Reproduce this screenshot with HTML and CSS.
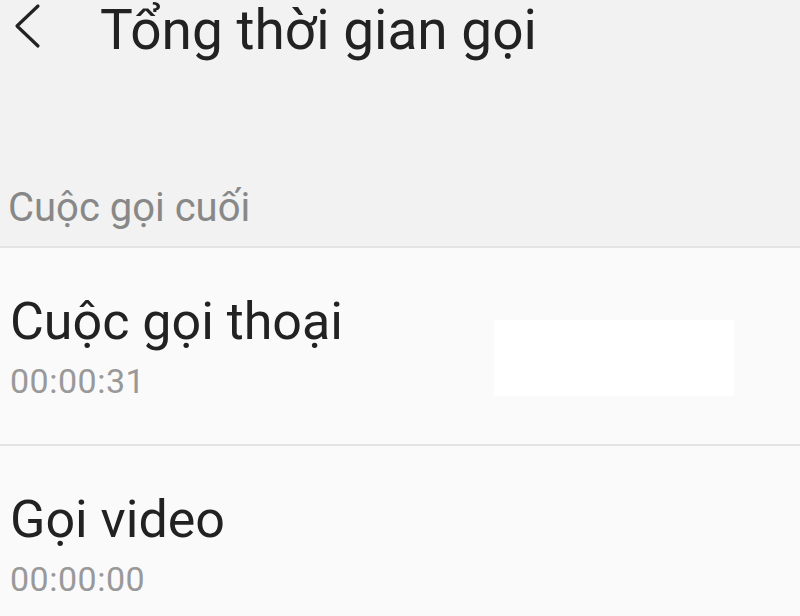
FILE: index.html
```html
<!DOCTYPE html>
<html lang="vi">
<head>
<meta charset="utf-8">
<link rel="stylesheet" href="styles.css">
</head>
<body>
<div class="screen">
  <header class="topbar">
    <span class="back"><svg width="30" height="46" viewBox="0 0 30 46"><path d="M26 3 L5 23 L26 43" fill="none" stroke="#222" stroke-width="3.2" stroke-linecap="round" stroke-linejoin="round"/></svg></span>
    <h1 class="title">Tổng thời gian gọi</h1>
  </header>
  <div class="section">Cuộc gọi cuối</div>
  <div class="list">
    <div class="item">
      <div class="item-main">Cuộc gọi thoại</div>
      <div class="item-sub">00:00:31</div>
      <div class="blank"></div>
    </div>
    <div class="item">
      <div class="item-main">Gọi video</div>
      <div class="item-sub">00:00:00</div>
    </div>
  </div>
</div>
</body>
</html>
```
FILE: styles.css
```css
html, body { margin: 0; padding: 0; }
body { font-family: Roboto, "Noto Sans", sans-serif; background: #fafafa; }
.screen { width: 800px; height: 616px; overflow: hidden; background: #fafafa; }
.topbar { height: 170px; background: #f2f2f2; display: flex; align-items: flex-start; }
.back { width: 100px; padding: 3px 0 0 12px; box-sizing: border-box; display: flex; }
.title { margin: 0; font-weight: 400; font-size: 55px; line-height: 60px; color: #222; }
.section { height: 78px; background: #f2f2f2; color: #888; font-size: 40px; padding-left: 8px; box-sizing: border-box; border-bottom: 2px solid #e4e4e4; line-height: 76px; }
.list { background: #fafafa; }
.item { position: relative; height: 198px; border-bottom: 2px solid #e4e4e4; padding: 44px 10px 0; box-sizing: border-box; }
.item-main { font-size: 52px; line-height: 60px; color: #222; }
.item-sub { font-size: 34px; line-height: 58px; color: #999; letter-spacing: 0.5px; }
.blank { position: absolute; left: 494px; top: 72px; width: 240px; height: 76px; background: #fff; }
```
